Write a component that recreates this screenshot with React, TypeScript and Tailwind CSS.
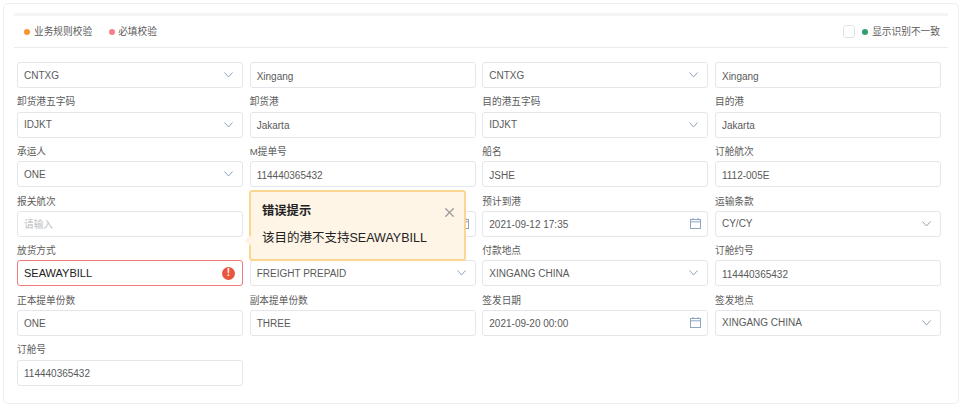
import React from "react";
import { X } from "lucide-react";

function Chevron() {
  return (
    <svg width="9" height="6" viewBox="0 0 9 6" fill="none" stroke="#8fa2bb" strokeWidth="1" className="shrink-0">
      <path d="M0.5 0.5L4.5 5L8.5 0.5" />
    </svg>
  );
}

function Calendar() {
  return (
    <svg width="11" height="11" viewBox="0 0 11 11" fill="none" stroke="#8fa6c2" strokeWidth="1" className="shrink-0">
      <rect x="0.5" y="1.5" width="10" height="9" />
      <path d="M0.5 3.8H10.5M3 0V2.2M8 0V2.2" />
    </svg>
  );
}

type F = {
  label?: string;
  value?: string;
  kind?: "select" | "date" | "input" | "error";
  placeholder?: boolean;
};

function Field({ label, value, kind = "input", placeholder }: F) {
  const isError = kind === "error";
  return (
    <div className="flex min-w-0 flex-col">
      {label !== undefined && (
        <div className="flex h-[23.6px] items-center pt-[5px] text-[9.7px] leading-none text-[#5c5c5c]">{label}</div>
      )}
      <div
        className={
          "flex h-[26px] items-center justify-between rounded-[3px] bg-white pl-[6px] " +
          (isError
            ? "border-[1.5px] border-[#f07a7a] pr-[7px]"
            : kind === "date"
            ? "border border-[#e3e6ea] pr-[6px]"
            : "border border-[#e3e6ea] pr-[9px]")
        }
      >
        <span
          className={
            (isError
              ? "text-[11px] text-[#222]"
              : placeholder
              ? "text-[9.7px] text-[#bdbdbd]"
              : "text-[10px] text-[#5a5a5a]") + (kind === "select" || isError ? "" : " pt-[2px]")
          }
        >
          {value}
        </span>
        {kind === "select" && <Chevron />}
        {kind === "date" && <Calendar />}
        {isError && (
          <span className="flex h-[13px] w-[13px] shrink-0 items-center justify-center rounded-full bg-[#e8553f] text-[10px] font-bold leading-none text-white">
            !
          </span>
        )}
      </div>
    </div>
  );
}

const fields: F[] = [
  { value: "CNTXG", kind: "select" },
  { value: "Xingang" },
  { value: "CNTXG", kind: "select" },
  { value: "Xingang" },
  { label: "卸货港五字码", value: "IDJKT", kind: "select" },
  { label: "卸货港", value: "Jakarta" },
  { label: "目的港五字码", value: "IDJKT", kind: "select" },
  { label: "目的港", value: "Jakarta" },
  { label: "承运人", value: "ONE", kind: "select" },
  { label: "M提单号", value: "114440365432" },
  { label: "船名", value: "JSHE" },
  { label: "订舱航次", value: "1112-005E" },
  { label: "报关航次", value: "请输入", placeholder: true },
  { label: "", value: "", kind: "date" },
  { label: "预计到港", value: "2021-09-12 17:35", kind: "date" },
  { label: "运输条款", value: "CY/CY", kind: "select" },
  { label: "放货方式", value: "SEAWAYBILL", kind: "error" },
  { label: "", value: "FREIGHT PREPAID", kind: "select" },
  { label: "付款地点", value: "XINGANG CHINA", kind: "select" },
  { label: "订舱约号", value: "114440365432" },
  { label: "正本提单份数", value: "ONE" },
  { label: "副本提单份数", value: "THREE" },
  { label: "签发日期", value: "2021-09-20 00:00", kind: "date" },
  { label: "签发地点", value: "XINGANG CHINA", kind: "select" },
  { label: "订舱号", value: "114440365432" },
];

export default function App() {
  return (
    <div className="h-[407px] w-[962px] overflow-hidden bg-white p-[3px] font-['Liberation_Sans','Noto_Sans_CJK_SC',sans-serif]">
      <div className="relative h-[401px] w-[956px] rounded-[5px] border border-[#efefef] bg-white px-[10px] pt-[9px]">
        <div className="h-[3px] bg-[#f5f5f5]" />
        <div className="flex h-[32px] items-center justify-between border-b border-[#ebebeb] pl-[10px] pr-[8px] pt-[1px] text-[9.7px] text-[#5c5c5c]">
          <div className="flex items-center">
            <span className="mr-[4px] h-[6px] w-[6px] rounded-full bg-[#f5962f]" />
            <span>业务规则校验</span>
            <span className="ml-[17px] mr-[3px] h-[6px] w-[6px] rounded-full bg-[#f57d8e]" />
            <span>必填校验</span>
          </div>
          <div className="flex items-center">
            <span className="mr-[7px] h-[13px] w-[12px] rounded-[3px] border border-[#dfe2e6] bg-white" />
            <span className="mr-[4px] h-[6px] w-[6px] rounded-full bg-[#2f9e6e]" />
            <span>显示识别不一致</span>
          </div>
        </div>
        <div className="grid grid-cols-[repeat(4,226px)] gap-x-[6.67px] pl-[3px] pt-[14px]">
          {fields.map((f, i) => (
            <Field key={i} {...f} />
          ))}
        </div>
        <div className="absolute left-[245px] top-[186px] h-[71px] w-[217px] rounded-[3px] border-2 border-[#fbd692] bg-[#fef5e7] pl-[11px] pr-[7px] pt-[10px] text-[#222]">
          <div className="flex items-center justify-between">
            <span className="text-[12.3px] font-bold leading-[18px]">错误提示</span>
            <X size={15} strokeWidth={2} color="#999999" className="mt-[2px]" />
          </div>
          <div className="mt-[9px] text-[12.5px] leading-[18px]">该目的港不支持SEAWAYBILL</div>
          <span className="absolute -left-[5px] top-[45px] h-[7px] w-[7px] rotate-45 bg-[#fef5e7]" />
        </div>
      </div>
    </div>
  );
}
